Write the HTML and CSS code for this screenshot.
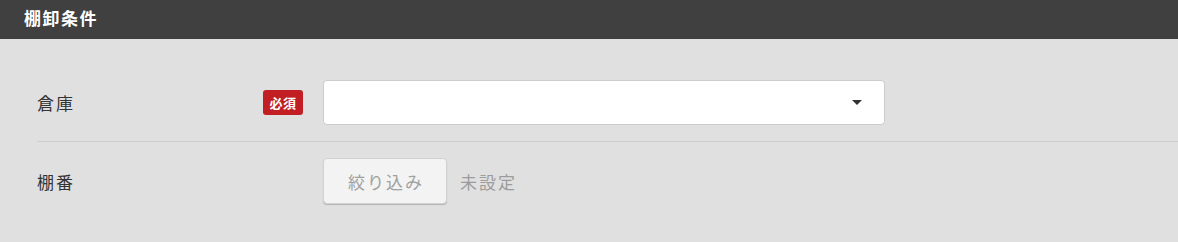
FILE: index.html
```html
<!DOCTYPE html>
<html lang="ja">
<head>
    <meta charset="UTF-8">
    <title>棚卸条件</title>
    <link rel="stylesheet" href="styles.css">
</head>
<body>
    <div class="section">
        <div class="section-head">棚卸条件</div>
        <div class="form">
            <div class="form-row">
                <div class="form-label">
                    <span>倉庫</span>
                    <span class="required">必須</span>
                </div>
                <div class="select">
                    <span class="select-arrow"></span>
                </div>
            </div>
            <div class="form-row">
                <div class="form-label">
                    <span>棚番</span>
                </div>
                <button class="filter-btn">絞り込み</button>
                <span class="filter-value">未設定</span>
            </div>
        </div>
    </div>
</body>
</html>
```

FILE: styles.css
```css
body {
    margin: 0;
    font-family: "Noto Sans CJK JP", "Noto Sans", sans-serif;
    background-color: #e0e0e0;
    color: #333;
}

.section-head {
    height: 39px;
    line-height: 35px;
    padding-left: 24px;
    background-color: #404040;
    color: #fff;
    font-size: 17px;
    font-weight: bold;
    letter-spacing: 1.5px;
}

.form {
    padding: 24px 0 0 37px;
}

.form-row {
    display: flex;
    align-items: center;
    padding: 17px 0 16px;
}

.form-row + .form-row {
    border-top: 1px solid #cdcdcd;
    padding-top: 16px;
}

.form-label {
    width: 266px;
    margin-right: 20px;
    display: flex;
    align-items: center;
    justify-content: space-between;
    font-size: 17px;
    letter-spacing: 2px;
    color: #333;
}

.required {
    width: 40px;
    height: 25px;
    line-height: 25px;
    text-align: center;
    background-color: #c11f24;
    color: #fff;
    font-size: 13px;
    font-weight: bold;
    letter-spacing: 0.5px;
    border-radius: 3px;
}

.select {
    width: 560px;
    height: 43px;
    background-color: #fff;
    border: 1px solid #cccccc;
    border-radius: 4px;
    display: flex;
    align-items: center;
    justify-content: flex-end;
}

.select-arrow {
    width: 0;
    height: 0;
    margin-right: 22px;
    border-left: 5px solid transparent;
    border-right: 5px solid transparent;
    border-top: 5px solid #333;
}

.filter-btn {
    width: 124px;
    height: 46px;
    background-color: #f3f3f3;
    border: 1px solid #d2d2d2;
    border-radius: 4px;
    box-shadow: 0 1px 1px rgba(0, 0, 0, 0.2);
    color: #a0a0a0;
    font-family: inherit;
    font-size: 17px;
    letter-spacing: 2px;
    padding: 0 0 0 2px;
}

.filter-value {
    margin-left: 13px;
    font-size: 17px;
    letter-spacing: 2px;
    color: #9c9c9c;
}
```
